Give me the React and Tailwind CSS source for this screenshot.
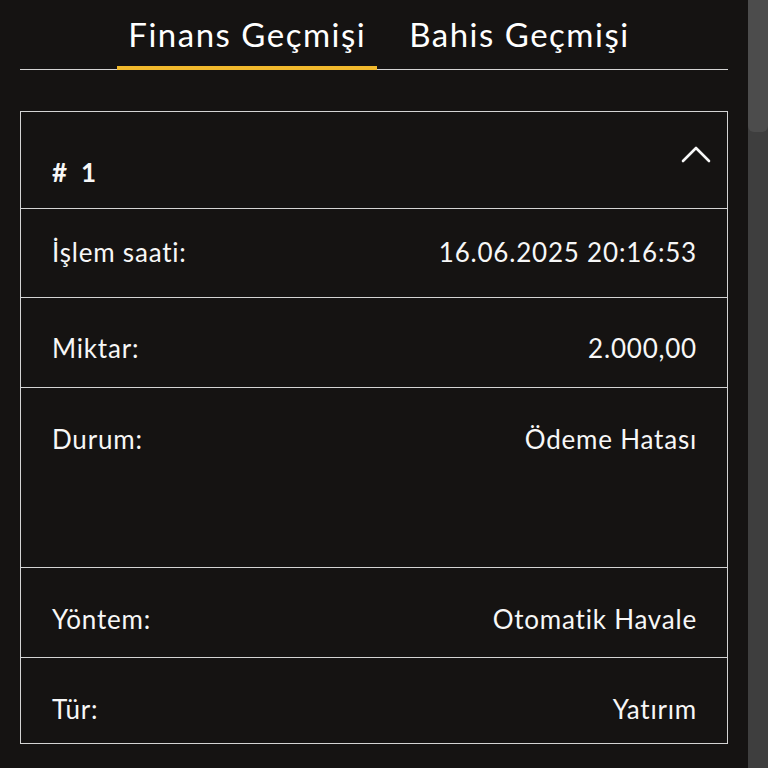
const rows = [
	{ label: "İşlem saati:", value: "16.06.2025 20:16:53", h: "h-[89px]", pt: "pt-[28px]" },
	{ label: "Miktar:", value: "2.000,00", h: "h-[90px]", pt: "pt-[35px]" },
	{ label: "Durum:", value: "Ödeme Hatası", h: "h-[180px]", pt: "pt-[36px]" },
	{ label: "Yöntem:", value: "Otomatik Havale", h: "h-[90px]", pt: "pt-[36px]" },
	{ label: "Tür:", value: "Yatırım", h: "h-[85px]", pt: "pt-[36px]", last: true },
];

function Tabs() {
	return (
		<div className="mx-5 flex justify-center border-b border-[#d4d4d4] pl-[10px]">
			<div className="flex gap-[21px]">
				<button className="relative px-[11px] pt-[14px] pb-[15px] text-[33px] leading-[40px] tracking-[1.5px] text-white">
					Finans Geçmişi
					<span className="absolute left-0 right-0 -bottom-px h-[4px] bg-[#f0b82c]" />
				</button>
				<button className="px-[11px] pt-[14px] pb-[15px] text-[33px] leading-[40px] tracking-[1.5px] text-white">
					Bahis Geçmişi
				</button>
			</div>
		</div>
	);
}

function Row({ label, value, h, pt, last }) {
	return (
		<div
			className={`flex items-start justify-between pl-[31px] pr-[30px] ${h} ${pt} ${
				last ? "" : "border-b border-[#d4d4d4]"
			}`}>
			<span>{label}</span>
			<span>{value}</span>
		</div>
	);
}

export default function App() {
	return (
		<div
			className="flex h-[768px] overflow-hidden bg-[#151312] text-[#f7f7f7]"
			style={{ fontFamily: "Lato, 'Noto Sans', sans-serif" }}>
			<div className="flex-1">
				<Tabs />
				<div className="mx-5 mt-[41px] border border-[#d4d4d4] text-[26px] leading-[31px] tracking-[0.8px]">
					<div className="flex h-[97px] items-start justify-between border-b border-[#d4d4d4] pl-[31px] pr-[15px]">
						<span className="mt-[45px] flex gap-[13px] font-bold">
							<span>#</span>
							<span>1</span>
						</span>
						<svg width="32" height="20" viewBox="0 0 32 20" className="mt-[33px]">
							<polyline
								points="3,16 16,3 29,16"
								fill="none"
								stroke="#f7f7f7"
								strokeWidth="2.6"
								strokeLinecap="round"
								strokeLinejoin="round"
							/>
						</svg>
					</div>
					{rows.map((r) => (
						<Row key={r.label} {...r} />
					))}
				</div>
			</div>
			<div className="flex w-5 flex-col bg-[#3e3e3e]">
				<div className="h-[132px] rounded-b-[6px] bg-[#4c4c4c]" />
			</div>
		</div>
	);
}
